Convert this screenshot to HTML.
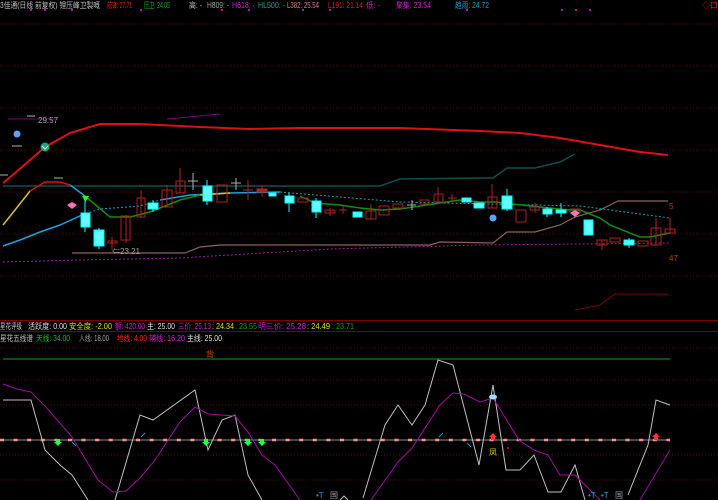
<!DOCTYPE html>
<html><head><meta charset="utf-8"><style>
html,body{margin:0;padding:0;background:#000;width:718px;height:500px;overflow:hidden}
svg{display:block}
text{font-family:"Liberation Sans","Noto Sans CJK SC",sans-serif;font-size:8px}
</style></head><body>
<svg width="718" height="500" viewBox="0 0 718 500" xmlns="http://www.w3.org/2000/svg">
<rect width="718" height="500" fill="#000"/>
<!-- top bar -->
<g lengthAdjust="spacingAndGlyphs">
<text x="0" y="8" fill="#c0c0c0" textLength="100" lengthAdjust="spacingAndGlyphs">3佳通(日线 前复权) 锂压峰卫製嘅</text>
<text x="107" y="8" fill="#e02020" textLength="25" lengthAdjust="spacingAndGlyphs">前锋: 27.71</text>
<text x="144" y="8" fill="#20b020" textLength="26" lengthAdjust="spacingAndGlyphs">压卫: 24.05</text>
<text x="189" y="8" fill="#c0c0c0" textLength="13" lengthAdjust="spacingAndGlyphs">高: -</text>
<text x="207" y="8" fill="#a0a0a0" textLength="22" lengthAdjust="spacingAndGlyphs">H809: -</text>
<text x="232" y="8" fill="#d020d0" textLength="23" lengthAdjust="spacingAndGlyphs">H618: -</text>
<text x="258" y="8" fill="#20a0a0" textLength="27" lengthAdjust="spacingAndGlyphs">HL500: -</text>
<text x="287" y="8" fill="#e08080" textLength="32" lengthAdjust="spacingAndGlyphs">L382: 25.54</text>
<text x="328" y="8" fill="#e02020" textLength="35" lengthAdjust="spacingAndGlyphs">L191: 21.14</text>
<text x="366" y="8" fill="#d020d0" textLength="14" lengthAdjust="spacingAndGlyphs">低: -</text>
<text x="396" y="8" fill="#d020d0" textLength="35" lengthAdjust="spacingAndGlyphs">聚集: 23.54</text>
<text x="455" y="8" fill="#20a0d0" textLength="34" lengthAdjust="spacingAndGlyphs">趋雨: 24.72</text>
<text x="702" y="8" fill="#e02020" textLength="16" lengthAdjust="spacingAndGlyphs">◇口</text>
</g>
<g fill="#c010c0"><rect x="30" y="9" width="2" height="2"/><rect x="44" y="9" width="2" height="2"/><rect x="71" y="9" width="2" height="2"/><rect x="140" y="9" width="2" height="2"/><rect x="221" y="9" width="2" height="2"/><rect x="248" y="9" width="2" height="2"/><rect x="302" y="9" width="2" height="2"/><rect x="329" y="9" width="2" height="2"/><rect x="466" y="9" width="2" height="2"/><rect x="561" y="9" width="2" height="2"/><rect x="575" y="9" width="2" height="2"/><rect x="589" y="9" width="2" height="2"/></g>
<!-- grid -->
<g stroke="#5a0a0a" stroke-width="1" stroke-dasharray="1,2">
<line x1="0" y1="24" x2="718" y2="24"/><line x1="0" y1="66" x2="718" y2="66"/><line x1="0" y1="108" x2="718" y2="108"/><line x1="0" y1="150" x2="718" y2="150"/><line x1="0" y1="192" x2="718" y2="192"/><line x1="0" y1="234" x2="718" y2="234"/><line x1="0" y1="276" x2="718" y2="276"/>
<line x1="0" y1="348" x2="718" y2="348"/><line x1="0" y1="380" x2="718" y2="380"/><line x1="0" y1="405" x2="718" y2="405"/><line x1="0" y1="455" x2="718" y2="455"/><line x1="0" y1="480" x2="718" y2="480"/>
</g>
<!-- bands -->
<polyline fill="none" stroke="#e01010" stroke-width="2" points="3,183 15,173 30,160 45,147 70,133 100,124 140,124 200,127 250,129 300,128 400,128 480,131 520,133 560,138 600,145 640,152 668,155"/>
<polyline fill="none" stroke="#0e5050" stroke-width="1.5" points="3,186 380,186 400,179 480,178 493,178 507,168 535,168 560,162 575,154"/>
<polyline fill="none" stroke="#800080" stroke-width="1" points="8,119 58,119"/>
<polyline fill="none" stroke="#800080" stroke-width="1" points="167,119 220,114"/>
<polyline fill="none" stroke="#e0c020" stroke-width="1.5" points="3,225 15,210 30,191"/>
<polyline fill="none" stroke="#e01010" stroke-width="1.5" points="30,191 45,182 60,182 70,185"/>
<polyline fill="none" stroke="#20a0e0" stroke-width="1.5" points="70,185 85,196"/>
<polyline fill="none" stroke="#20a0e0" stroke-width="1.5" points="3,246 20,240 40,232 60,225 82,215"/>
<polyline fill="none" stroke="#20a0e0" stroke-width="1" stroke-dasharray="2,2" points="82,215 100,209 140,206 160,200"/>
<polyline fill="none" stroke="#20a0e0" stroke-width="1.5" points="160,200 190,195 230,193 280,192"/>
<polyline fill="none" stroke="#20a0b0" stroke-width="1" stroke-dasharray="2,2" points="280,192 400,202 580,206 670,218"/>
<polyline fill="none" stroke="#109010" stroke-width="1.5" points="85,196 110,217 130,217 150,212 165,206 180,200 200,195"/>
<polyline fill="none" stroke="#e0c020" stroke-width="1.5" points="200,195 230,193"/>
<polyline fill="none" stroke="#109010" stroke-width="1.5" points="300,196 315,203 340,205 360,208 380,210 400,209 420,206 440,203 460,200 480,202 495,202 530,206 570,210 580,210 600,218 610,225 640,237 650,237 670,233"/>
<polyline fill="none" stroke="#906060" stroke-width="1.2" points="72,253 185,253 200,247 220,245 430,245 440,242 493,243 507,232 535,232 560,225 575,217 600,210 618,201 668,201"/>
<polyline fill="none" stroke="#a020a0" stroke-width="1" stroke-dasharray="2,2" points="3,262 80,260 180,258 330,249 480,245 580,244 670,243"/>
<polyline fill="none" stroke="#800000" stroke-width="1" points="575,310 600,305 615,294 668,294"/>
<!-- candles -->
<g stroke-width="1">
<g stroke="#00ffff" fill="#60ffff">
<line x1="85" y1="196" x2="85" y2="232"/><rect x="81" y="213" width="9" height="14"/>
<line x1="99" y1="228" x2="99" y2="249"/><rect x="94" y="230" width="10" height="16"/>
<line x1="153" y1="200" x2="153" y2="212"/><rect x="148" y="203" width="10" height="6"/>
<line x1="207" y1="180" x2="207" y2="205"/><rect x="203" y="186" width="9" height="15"/>
<rect x="269" y="193" width="7" height="3"/>
<line x1="289" y1="193" x2="289" y2="212"/><rect x="285" y="196" width="9" height="7"/>
<line x1="316" y1="198" x2="316" y2="218"/><rect x="312" y="201" width="9" height="11"/>
<rect x="353" y="212" width="9" height="5"/>
<rect x="462" y="198" width="9" height="4"/>
<rect x="474" y="203" width="10" height="5"/>
<line x1="507" y1="189" x2="507" y2="211"/><rect x="502" y="196" width="10" height="13"/>
<line x1="547" y1="207" x2="547" y2="217"/><rect x="543" y="209" width="9" height="5"/>
<line x1="561" y1="203" x2="561" y2="217"/><rect x="556" y="210" width="10" height="3"/>
<rect x="584" y="220" width="9" height="15"/>
<line x1="629" y1="238" x2="629" y2="248"/><rect x="624" y="240" width="10" height="5"/>
</g>
<g stroke="#b02020" fill="none">
<line x1="112" y1="237" x2="112" y2="250"/><rect x="108" y="241" width="9" height="2"/>
<line x1="126" y1="215" x2="126" y2="243"/><rect x="121" y="216" width="9" height="24"/>
<line x1="141" y1="190" x2="141" y2="218"/><rect x="137" y="198" width="8" height="19"/>
<line x1="167" y1="185" x2="167" y2="207"/><rect x="162" y="190" width="10" height="17"/>
<line x1="180" y1="168" x2="180" y2="193"/><rect x="176" y="181" width="9" height="12"/>
<rect x="217" y="185" width="10" height="17"/>
<line x1="248" y1="180" x2="248" y2="200"/><line x1="243" y1="190" x2="253" y2="190"/>
<line x1="262" y1="185" x2="262" y2="197"/><rect x="257" y="189" width="10" height="3" fill="#b02020"/>
<rect x="298" y="198" width="10" height="4"/>
<line x1="330" y1="208" x2="330" y2="216"/><rect x="325" y="210" width="10" height="3"/>
<line x1="343" y1="206" x2="343" y2="214"/><line x1="339" y1="210" x2="347" y2="210"/>
<line x1="371" y1="204" x2="371" y2="219"/><rect x="366" y="211" width="10" height="8"/>
<rect x="379" y="206" width="10" height="9"/>
<rect x="393" y="204" width="10" height="4"/>
<rect x="420" y="200" width="9" height="4"/>
<line x1="438" y1="187" x2="438" y2="202"/><rect x="434" y="194" width="9" height="8"/>
<line x1="452" y1="194" x2="452" y2="202"/><line x1="448" y1="198" x2="457" y2="198"/>
<line x1="492" y1="184" x2="492" y2="208"/><rect x="488" y="197" width="9" height="11"/>
<rect x="516" y="210" width="10" height="12"/>
<line x1="535" y1="203" x2="535" y2="213"/><rect x="530" y="207" width="9" height="3"/>
<rect x="570" y="209" width="10" height="4"/>
<line x1="602" y1="240" x2="602" y2="250"/><rect x="597" y="240" width="10" height="5"/>
<rect x="610" y="238" width="10" height="4"/>
<rect x="638" y="241" width="10" height="5"/>
<line x1="656" y1="218" x2="656" y2="245"/><rect x="651" y="228" width="10" height="17"/>
<line x1="670" y1="218" x2="670" y2="233"/><rect x="665" y="229" width="10" height="4"/>
</g>
<g stroke="#b0b0b0"><line x1="193" y1="173" x2="193" y2="190"/><line x1="188" y1="181" x2="198" y2="181"/><line x1="236" y1="178" x2="236" y2="190"/><line x1="231" y1="183" x2="241" y2="183"/><line x1="412" y1="200" x2="412" y2="210"/><line x1="407" y1="205" x2="416" y2="205"/>
<line x1="12" y1="146" x2="22" y2="146"/><line x1="0" y1="175" x2="8" y2="175"/><line x1="54" y1="178" x2="63" y2="178"/><line x1="27" y1="116" x2="35" y2="116"/></g>
</g>
<!-- markers -->
<circle cx="17" cy="134" r="3.5" fill="#60a0ff"/>
<circle cx="45" cy="147" r="4.5" fill="#20a080"/><path d="M42,146 L45,149 L48,146" stroke="#d0ffe0" fill="none"/>
<path d="M67,205 L72,202 L77,205 L72,209Z" fill="#ff70c0"/>
<path d="M82,196 L89,196 L85.5,202Z" fill="#20ff20"/>
<circle cx="493" cy="218" r="3.5" fill="#60a0ff"/>
<path d="M570,213 L575,210 L580,213 L575,217Z" fill="#ff70c0"/>
<text x="38" y="123" fill="#a0a0a0">29.57</text>
<text x="112" y="254" fill="#a0a0a0">⇐23.21</text>
<text x="669" y="209" fill="#c04010">5</text>
<text x="669" y="261" fill="#c04010">47</text>
<!-- info bars -->
<line x1="0" y1="320.5" x2="718" y2="320.5" stroke="#800000"/>
<line x1="0" y1="331.5" x2="718" y2="331.5" stroke="#800000"/>
<text x="0" y="329" fill="#c0c0c0" textLength="22" lengthAdjust="spacingAndGlyphs">星花评级</text>
<text x="28" y="329" fill="#e0e0e0" textLength="39" lengthAdjust="spacingAndGlyphs">活跃度: 0.00</text>
<text x="69" y="329" fill="#e0e000" textLength="43" lengthAdjust="spacingAndGlyphs">安全度: -2.00</text>
<text x="115" y="329" fill="#d020d0" textLength="30" lengthAdjust="spacingAndGlyphs">额: 420.00</text>
<text x="147" y="329" fill="#e0e0e0" textLength="28" lengthAdjust="spacingAndGlyphs">主: 25.00</text>
<text x="178" y="329" fill="#d020d0" textLength="33" lengthAdjust="spacingAndGlyphs">三价: 25.13</text>
<text x="212" y="329" fill="#e0e000" textLength="22" lengthAdjust="spacingAndGlyphs">: 24.34</text>
<text x="235" y="329" fill="#20a020" textLength="22" lengthAdjust="spacingAndGlyphs">: 23.55</text>
<text x="258" y="329" fill="#d020d0" textLength="48" lengthAdjust="spacingAndGlyphs">明三价: 25.28</text>
<text x="307" y="329" fill="#e0e000" textLength="23" lengthAdjust="spacingAndGlyphs">: 24.49</text>
<text x="332" y="329" fill="#20a020" textLength="22" lengthAdjust="spacingAndGlyphs">: 23.71</text>
<text x="0" y="341" fill="#c0c0c0" textLength="33" lengthAdjust="spacingAndGlyphs">星花五线谱</text>
<text x="36" y="341" fill="#20c020" textLength="34" lengthAdjust="spacingAndGlyphs">天线: 34.00</text>
<text x="79" y="341" fill="#a0a0a0" textLength="30" lengthAdjust="spacingAndGlyphs">人线: 18.00</text>
<text x="117" y="341" fill="#ff2020" textLength="30" lengthAdjust="spacingAndGlyphs">地线: 4.00</text>
<text x="149" y="341" fill="#d020d0" textLength="36" lengthAdjust="spacingAndGlyphs">辅线: 16.20</text>
<text x="187" y="341" fill="#e0e0e0" textLength="35" lengthAdjust="spacingAndGlyphs">主线: 25.00</text>
<!-- lower pane -->
<line x1="3" y1="359" x2="670" y2="359" stroke="#108010" stroke-width="1.2"/>
<text x="206" y="357" fill="#e04000">背</text>
<line x1="0" y1="440" x2="670" y2="440" stroke="#909090"/>
<line x1="0" y1="440" x2="670" y2="440" stroke="#ff9090" stroke-width="2.5" stroke-dasharray="4,9.6"/>
<polyline fill="none" stroke="#c0c0c0" stroke-width="1" points="3,400 31,400 45,450 60,465 72,475 88,500"/>
<polyline fill="none" stroke="#c0c0c0" stroke-width="1" points="115,500 140,415 153,420 195,390 208,450 222,420 235,415 248,475 262,500"/>
<polyline fill="none" stroke="#c0c0c0" stroke-width="1" points="363,498 385,425 398,405 412,425 425,405 438,360 453,365 479,465 493,385 506,470 520,470 534,455 548,492 561,492 575,465 585,500"/>
<polyline fill="none" stroke="#c0c0c0" stroke-width="1" points="628,495 648,445 656,400 670,405"/>
<polyline fill="none" stroke="#a010a0" stroke-width="1" points="3,384 17,389 31,392 45,406 72,437 98,480 113,492 126,491 140,478 155,460 180,422 195,407 208,414 235,416 248,432 262,455 275,465 300,500"/>
<polyline fill="none" stroke="#a010a0" stroke-width="1" points="371,500 398,462 412,448 440,405 453,393 464,394 480,402 493,398 519,440 534,450 548,455 560,475 575,475 600,500"/>
<polyline fill="none" stroke="#a010a0" stroke-width="1" points="640,500 670,450"/>
<g fill="#20ff40"><path d="M56,439 h4 v3 h2 l-4,4 l-4,-4 h2z"/><path d="M204,439 h4 v3 h2 l-4,4 l-4,-4 h2z"/><path d="M246,439 h4 v3 h2 l-4,4 l-4,-4 h2z"/><path d="M260,439 h4 v3 h2 l-4,4 l-4,-4 h2z"/></g>
<g fill="#ff3030"><path d="M491,440 v-3 h-2 l4,-4 l4,4 h-2 v3z"/><path d="M654,440 v-3 h-2 l4,-4 l4,4 h-2 v3z"/></g>
<ellipse cx="493" cy="397" rx="4" ry="2.5" fill="#a0e0ff"/>
<text x="489" y="455" fill="#d0d000">凤</text>
<circle cx="508" cy="448" r="1" fill="#e02020"/>
<g stroke="#20a0d0"><line x1="72" y1="442" x2="76" y2="446"/><line x1="141" y1="437" x2="145" y2="433"/><line x1="439" y1="437" x2="443" y2="433"/><line x1="467" y1="443" x2="471" y2="447"/></g>
<text x="316" y="498" fill="#20a0d0">•T</text><text x="330" y="498" fill="#a0a0b0">国</text>
<text x="588" y="498" fill="#20a0d0">•T</text><text x="601" y="498" fill="#20a0d0">•T</text><text x="615" y="498" fill="#a0a0b0">国</text>
<path d="M340,500 L344,496 L348,500" stroke="#c0c0c0" fill="none"/>
</svg>
</body></html>
